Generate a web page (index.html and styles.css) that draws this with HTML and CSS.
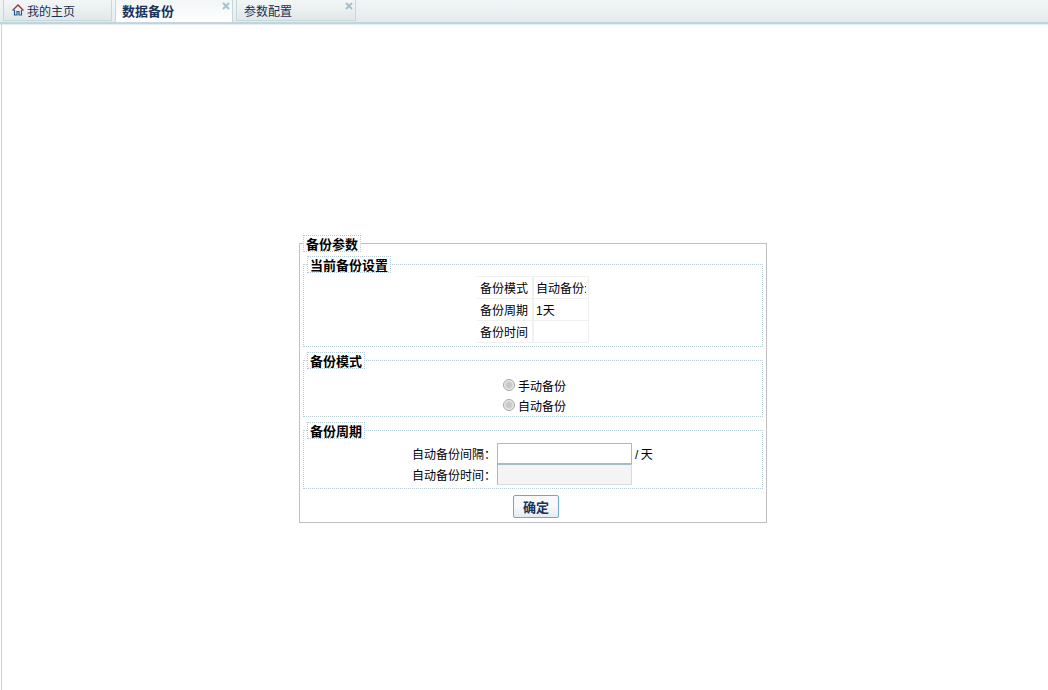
FILE: index.html

```html
<!DOCTYPE html>
<html lang="zh-CN">
  <head>
    <meta charset="UTF-8" />
    <title>数据备份</title>
    <link rel="stylesheet" href="styles.css">
  </head>
  <body>
    <div class="tabs">
      <div class="tab tab-home">
        <svg class="home-icon" width="12" height="12" viewBox="0 0 12 12">
          <path d="M0.5 6.5 L6 1 L11.5 6.5" fill="none" stroke="#8c3a2c" stroke-width="1.4" />
          <path d="M2.5 6 V11 H5 V7.5 H7 V11 H9.5 V6" fill="none" stroke="#1f5c94" stroke-width="1.2" />
        </svg>
        <span>我的主页</span>
      </div>
      <div class="tab tab-active">
        <span>数据备份</span>
        <svg class="close" width="8" height="8" viewBox="0 0 8 8">
          <path d="M1 1 L7 7 M7 1 L1 7" stroke="#a9c0c9" stroke-width="2" />
        </svg>
      </div>
      <div class="tab tab-config">
        <span>参数配置</span>
        <svg class="close" width="8" height="8" viewBox="0 0 8 8">
          <path d="M1 1 L7 7 M7 1 L1 7" stroke="#a9c0c9" stroke-width="2" />
        </svg>
      </div>
    </div>

    <div class="content">
      <form class="panel">
        <fieldset class="outer">
          <legend>备份参数</legend>

          <fieldset class="group group-current">
            <legend>当前备份设置</legend>
            <table class="current">
              <tr>
                <th>备份模式</th>
                <td><div class="clip">自动备份:</div></td>
              </tr>
              <tr>
                <th>备份周期</th>
                <td>1天</td>
              </tr>
              <tr>
                <th>备份时间</th>
                <td></td>
              </tr>
            </table>
          </fieldset>

          <fieldset class="group group-mode">
            <legend>备份模式</legend>
            <div class="radios">
              <label class="radio-row"><i class="radio"></i>手动备份</label>
              <label class="radio-row"><i class="radio"></i>自动备份</label>
            </div>
          </fieldset>

          <fieldset class="group group-cycle">
            <legend>备份周期</legend>
            <div class="field-row">
              <span class="field-label">自动备份间隔：</span>
              <input class="field" type="text" />
              <span class="unit">/ 天</span>
            </div>
            <div class="field-row">
              <span class="field-label">自动备份时间：</span>
              <input class="field field-off" type="text" disabled />
            </div>
          </fieldset>

          <div class="actions">
            <button class="btn" type="button">确定</button>
          </div>
        </fieldset>
      </form>
    </div>
  </body>
</html>
```

FILE: styles.css

```css
* {
  margin: 0;
  padding: 0;
  box-sizing: border-box;
}

html,
body {
  height: 100%;
}

body {
  background: #fff;
  color: #000;
  font-family: "Liberation Sans", "Noto Sans CJK SC", sans-serif;
  font-size: 12px;
  overflow: hidden;
}

.tabs {
  display: flex;
  height: 24px;
  padding-left: 3px;
  background: linear-gradient(#f1f5f6, #e6ecee);
  border-bottom: 2px solid #bfd5dc;
  box-shadow: 0 1px 0 #e4eef1;
}

.tab {
  height: 21px;
  display: flex;
  align-items: center;
  border: 1px solid #c6d6da;
  border-top: 0;
  background: linear-gradient(#f3f6f7, #e1e8ea);
  color: #1b2f4e;
  position: relative;
}

.tab-home {
  width: 109px;
  padding-left: 8px;
}

.home-icon {
  margin-right: 3px;
}

.tab-active {
  width: 118px;
  height: 23px;
  margin-left: 3px;
  padding: 0 0 2px 6px;
  background: linear-gradient(#f2f6f7, #fff);
  font-size: 13px;
  font-weight: bold;
  color: #1b3358;
}

.tab-config {
  width: 120px;
  margin-left: 3px;
  padding-left: 7px;
}

.close {
  position: absolute;
  right: 2px;
  top: 2px;
}

.content {
  height: calc(100% - 24px);
  margin-left: 1px;
  border-left: 1px solid #c5d6da;
  padding: 211px 0 0 297px;
}

.panel {
  width: 468px;
}

fieldset {
  display: block;
  min-width: 0;
}

legend {
  font-weight: bold;
  font-size: 13px;
  line-height: 13px;
  border: 1px dotted #b4ccd2;
  padding: 2px 2px 0;
}

.outer {
  height: 288px;
  padding: 0 3px;
  border: 1px solid #c0c0c0;
}

.group {
  border: 1px dotted #b4ccd2;
  padding: 0;
}

.group > legend {
  margin-left: 3px;
}

.group-current {
  height: 91px;
  margin-top: 4px;
}

.current {
  border-collapse: collapse;
  margin-left: 173px;
  margin-top: 3px;
}

.current th {
  width: 56px;
  height: 22px;
  padding-right: 4px;
  font-weight: normal;
  text-align: right;
}

.current td {
  width: 55px;
  padding-left: 2px;
  border: 1px solid #f0f0f0;
  border-left-width: 2px;
}

.current th,
.current td {
  border-top: 1px solid #f0f0f0;
  border-bottom: 1px solid #f0f0f0;
}

.clip {
  width: 50px;
  overflow: hidden;
  white-space: nowrap;
}

.group-mode {
  height: 65px;
  margin-top: 5px;
}

.radios {
  padding: 6px 0 0 199px;
}

.radio-row {
  display: flex;
  align-items: center;
  height: 20px;
}

.radio {
  width: 12px;
  height: 12px;
  margin-right: 3px;
  border-radius: 50%;
  border: 1px solid #a4a4a4;
  background: radial-gradient(circle at 50% 50%, #c8c8c8 35%, #f6f6f6 75%, #dcdcdc 100%);
}

.group-cycle {
  height: 67px;
  margin-top: 5px;
}

.field-row {
  display: flex;
  align-items: center;
  height: 21px;
}

.field-row:first-of-type {
  margin-top: 4px;
}

.field-label {
  width: 193px;
  padding-right: 1px;
  text-align: right;
}

.field {
  width: 135px;
  height: 21px;
  border: 1px solid #a4bcc4;
  background: #fff;
}

.field-off {
  background: #f4f4f4;
  border-color: #a4bcc4 #d6dcde #d6dcde #a4bcc4;
}

.unit {
  margin-left: 3px;
  word-spacing: -1px;
}

.actions {
  display: flex;
  justify-content: center;
  margin-top: 6px;
  padding-left: 6px;
}

.btn {
  width: 46px;
  height: 23px;
  border: 1px solid #6fa9c4;
  border-radius: 2px;
  background: linear-gradient(#f7f9fa 50%, #e3ebf0);
  color: #1b3358;
  font-family: inherit;
  font-size: 13px;
  font-weight: bold;
}
```
